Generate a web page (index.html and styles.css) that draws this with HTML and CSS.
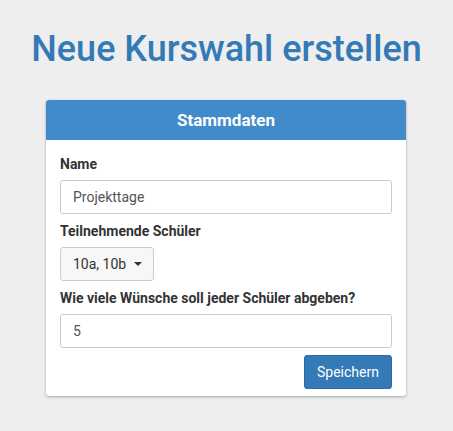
FILE: index.html
```html
<!DOCTYPE html>
<html lang="de">
<head>
<meta charset="utf-8">
<link rel="stylesheet" href="styles.css">
</head>
<body>
<h1 class="title">Neue Kurswahl erstellen</h1>
<div class="panel">
  <div class="panel-heading">Stammdaten</div>
  <div class="panel-body">
    <div class="group first">
      <label class="label">Name</label>
      <div class="input">Projekttage</div>
    </div>
    <div class="group">
      <label class="label">Teilnehmende Schüler</label>
      <div class="select"><span class="select-text">10a, 10b</span><span class="caret"></span></div>
    </div>
    <div class="group">
      <label class="label">Wie viele Wünsche soll jeder Schüler abgeben?</label>
      <div class="input">5</div>
    </div>
    <div class="actions">
      <button class="btn">Speichern</button>
    </div>
  </div>
</div>
</body>
</html>
```
FILE: styles.css
```css
* { box-sizing: border-box; }
html, body { margin: 0; padding: 0; }
body {
  background: #eeeeee;
  font-family: Roboto, "Liberation Sans", sans-serif;
  font-size: 14px;
  color: #333;
  width: 453px;
  height: 431px;
  overflow: hidden;
}
.title {
  margin: 0;
  padding-top: 27px;
  height: 100px;
  text-align: center;
  font-size: 36px;
  font-weight: 500;
  line-height: 44px;
  color: #337ab7;
}
.panel {
  width: 360px;
  margin-left: 46px;
  background: #fff;
  border-radius: 3px;
  box-shadow: 0 1px 3px rgba(0,0,0,0.3);
  overflow: hidden;
}
.panel-heading {
  height: 40px;
  background: #428bca;
  color: #fff;
  font-size: 17px;
  font-weight: bold;
  text-align: center;
  line-height: 40px;
}
.panel-body {
  padding: 14px 14px 7px 14px;
}
.group { margin-top: 7px; }
.group.first { margin-top: 0; }
.label {
  display: block;
  font-weight: bold;
  line-height: 20px;
  margin-bottom: 6px;
}
.input {
  height: 34px;
  border: 1px solid #ccc;
  border-radius: 3px;
  padding: 0 12px;
  line-height: 32px;
  color: #555;
  background: #fff;
}
.select {
  display: inline-flex;
  align-items: center;
  gap: 8px;
  height: 34px;
  border: 1px solid #ccc;
  border-radius: 3px;
  padding: 0 11px 0 12px;
  background: #f7f7f7;
  color: #333;
  white-space: nowrap;
}
.select-text { line-height: 32px; }
.caret {
  width: 0; height: 0;
  border-left: 4px solid transparent;
  border-right: 4px solid transparent;
  border-top: 4px solid #333;
}
.actions {
  display: flex;
  justify-content: flex-end;
  margin-top: 7px;
}
.btn {
  height: 34px;
  width: 88px;
  background: #337ab7;
  border: 1px solid #2e6da4;
  border-radius: 3px;
  color: #fff;
  font-family: Roboto, "Liberation Sans", sans-serif;
  font-size: 14px;
  padding: 0;
}
```
